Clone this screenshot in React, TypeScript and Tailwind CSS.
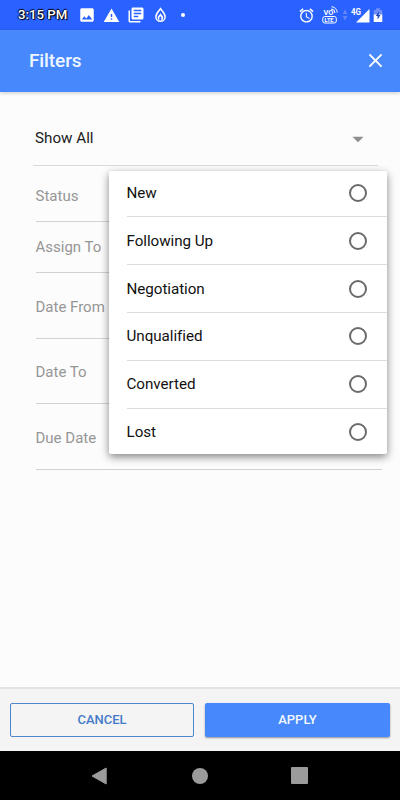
import {
  MdAlarm,
  MdArrowDropDown,
  MdClose,
  MdImage,
  MdLibraryBooks,
  MdWarning,
} from "react-icons/md";

const fields = [
  { label: "Status", row: "h-14 pt-[6px]" },
  { label: "Assign To", row: "h-[51px] pt-[1px]" },
  { label: "Date From", row: "h-[66px] pt-[3px]" },
  { label: "Date To", row: "h-[65px] pt-[3px]" },
  { label: "Due Date", row: "h-[66px] pt-[4px]" },
];

const options = [
  { label: "New", row: "h-[46px] pb-[1px]" },
  { label: "Following Up", row: "h-12" },
  { label: "Negotiation", row: "h-12" },
  { label: "Unqualified", row: "h-12 pb-[1px]" },
  { label: "Converted", row: "h-12 pb-[1px]" },
  { label: "Lost", row: "h-[45px] pt-[1px]" },
];

function StatusBar() {
  return (
    <div className="flex h-[30px] items-center justify-between bg-[#2962ff] pl-[18px] pr-[17px] text-white">
      <div className="flex items-center">
        <span className="w-[60px] whitespace-nowrap text-[13.2px] font-medium leading-none [text-shadow:1px_1px_1px_#000,-1px_0_1px_#000,0_-1px_1px_#000]">
          3:15 PM
        </span>
        <MdImage className="size-[18px]" />
        <MdWarning className="ml-[7px] size-[17px]" />
        <MdLibraryBooks className="ml-[7px] size-[18px]" />
        <svg className="ml-[9px] h-4 w-[13px]" viewBox="0 0 12 16">
          <path
            d="M6 1.600C4.500 4 1.400 6.400 1.400 9.700a4.600 4.600 0 0 0 9.200 0C10.600 6.400 7.500 4 6 1.600Z"
            fill="none"
            stroke="currentColor"
            strokeWidth="1.500"
          />
          <path
            d="M6 6C5.700 8 3.200 8.500 3.200 10.500c0 1.400.7 2.400 1.600 2.800V10.500L6 9.300l.8 1.200v3.500c1-.3 1.900-1.500 1.900-3.400C8.700 8.500 6.500 7.800 6 6Z"
            fill="currentColor"
          />
        </svg>
        <span className="ml-[14px] size-1 rounded-full bg-white" />
      </div>

      <div className="flex items-center">
        <MdAlarm className="size-[17px]" />
        <svg className="ml-[7px] h-[18px] w-4" viewBox="0 0 16 18">
          <text
            x="1.500"
            y="9.300"
            fill="currentColor"
            fontFamily="Roboto, sans-serif"
            fontSize="7.500"
            fontWeight="700"
          >
            VO
          </text>
          <path
            d="M9 3a4 4 0 0 1 4 4M9.500 .8a5.700 5.700 0 0 1 5.700 5.700"
            fill="none"
            stroke="currentColor"
            strokeWidth="1"
          />
          <rect
            x=".8"
            y="10.500"
            width="13.500"
            height="6.500"
            rx="2"
            fill="none"
            stroke="currentColor"
          />
          <text
            x="2.600"
            y="15.900"
            fill="currentColor"
            fontFamily="Roboto, sans-serif"
            fontSize="5.500"
            fontWeight="700"
          >
            LTE
          </text>
        </svg>
        <svg className="ml-[4px] h-3 w-[6px] text-[#6685f5]" viewBox="0 0 6 12">
          <path d="M3 .5 5.300 5H.7ZM3 11.500.7 7h4.600Z" fill="currentColor" />
        </svg>
        <svg className="ml-[3px] h-4 w-[19px]" viewBox="0 0 19 16">
          <path d="M18.500 2v13.500H5Z" fill="currentColor" />
          <text
            x="0"
            y="8"
            fill="currentColor"
            stroke="#2962ff"
            strokeWidth="1.500"
            paintOrder="stroke"
            fontFamily="Roboto, sans-serif"
            fontSize="8.500"
            fontWeight="700"
            textLength="10"
            lengthAdjust="spacingAndGlyphs"
          >
            4G
          </text>
        </svg>
        <svg className="ml-[3px] h-[14px] w-[10px]" viewBox="0 0 10 14">
          <path d="M.7 2H3V.3h4V2h2.300v5H.7Z" fill="#6e8df8" />
          <path d="M.7 6.500h8.600V14H.7Z" fill="currentColor" />
          <path d="M5.800 3.500 2.800 8h1.800v3.500L7.500 7H5.800Z" fill="#2447bd" />
        </svg>
      </div>
    </div>
  );
}

function OptionsMenu() {
  return (
    <div className="absolute left-[109px] top-[79px] h-[283px] w-[278px] rounded-[2px] bg-white pl-[17.5px] shadow-[0_3px_8px_rgba(0,0,0,0.48)]">
      {options.map((option) => (
        <label
          key={option.label}
          className={`${option.row} flex items-center justify-between border-b border-[#dcdcdc] pr-5 text-[15.2px] tracking-[-0.05px] text-[#111] last:border-0`}
        >
          <span className="pt-[1px]">{option.label}</span>
          <span className="size-[18px] rounded-full border-2 border-[#6b6b6b]" />
        </label>
      ))}
    </div>
  );
}

function App() {
  return (
    <div className="flex h-[800px] w-[400px] flex-col overflow-hidden bg-[#fcfcfc] font-['Roboto',sans-serif]">
      <StatusBar />

      <header className="z-10 flex h-[62px] shrink-0 items-center justify-between bg-[#4788fc] pl-[29px] pr-[15px] text-white shadow-[0_1px_4px_rgba(0,0,0,0.2)]">
        <h1 className="text-[19px] font-medium tracking-[-0.1px] text-[#eef6ff]">
          Filters
        </h1>
        <MdClose className="mb-[1px] size-[19px] scale-[1.22]" />
      </header>

      <main className="relative flex-1 pt-5">
        <div className="ml-[33px] flex h-[54px] w-[345px] items-center justify-between border-b border-[#dadada] pl-[2px] pr-[8.500px]">
          <span className="text-[15.2px] text-[#1a1a1a]">Show All</span>
          <MdArrowDropDown className="size-6 scale-110 text-[#8e8e8e]" />
        </div>
        {fields.map((field) => (
          <div
            key={field.label}
            className={`${field.row} ml-[35.5px] flex w-[346px] items-center border-b border-[#d2d2d2] text-[15px] text-[#969696]`}
          >
            {field.label}
          </div>
        ))}
        <OptionsMenu />
      </main>

      <footer className="flex h-16 shrink-0 gap-[11px] border-t-2 border-[#e3e3e3] bg-[#f4f4f4] pl-[10px] pr-[10px] pt-[14px]">
        <button className="h-[34px] w-[184px] rounded-[2px] border border-[#4c86cc] text-[13px] font-medium text-[#447bc8]">
          CANCEL
        </button>
        <button className="h-[34px] w-[185px] rounded-[2px] bg-[#4788fc] text-[13px] font-medium text-[#f1f8ff] shadow-[0_1px_2px_rgba(0,0,0,0.4)]">
          APPLY
        </button>
      </footer>

      <nav className="flex h-[49px] shrink-0 items-center justify-center gap-[83px] bg-black pr-px text-[#9b9b9b]">
        <svg className="size-[18px] -translate-x-px" viewBox="0 0 18 18">
          <path
            d="M16.200 1v16L2 9Z"
            fill="currentColor"
            stroke="currentColor"
            strokeLinejoin="round"
          />
        </svg>
        <span className="size-4 rounded-full bg-[#9b9b9b]" />
        <span className="size-[17px] rounded-[1px] bg-[#9b9b9b]" />
      </nav>
    </div>
  );
}

export default App;
